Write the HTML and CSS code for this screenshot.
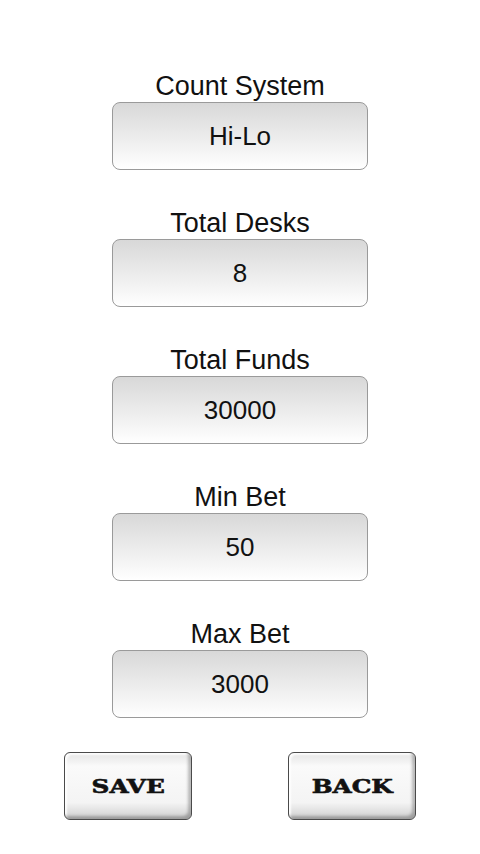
FILE: index.html
```html
<!DOCTYPE html>
<html lang="en">
<head>
  <meta charset="UTF-8">
  <title>Settings</title>
  <link rel="stylesheet" href="styles.css">
</head>
<body>

<div class="container">
  <div class="field">
    <div class="label">Count System</div>
    <div class="box">Hi-Lo</div>
  </div>
  <div class="field">
    <div class="label">Total Desks</div>
    <div class="box">8</div>
  </div>
  <div class="field">
    <div class="label">Total Funds</div>
    <div class="box">30000</div>
  </div>
  <div class="field">
    <div class="label">Min Bet</div>
    <div class="box">50</div>
  </div>
  <div class="field">
    <div class="label">Max Bet</div>
    <div class="box">3000</div>
  </div>

  <div class="buttons">
    <button class="btn"><span>SAVE</span></button>
    <button class="btn"><span>BACK</span></button>
  </div>
</div>

</body>
</html>
```

FILE: styles.css
```css
body {
  margin: 0;
  background: #fff;
  font-family: "Liberation Sans", Arial, sans-serif;
  color: #111;
}
.container {
  width: 480px;
  padding-top: 70px;
  display: flex;
  flex-direction: column;
  align-items: center;
}
.field {
  display: flex;
  flex-direction: column;
  align-items: center;
  margin-bottom: 37px;
}
.label {
  height: 32px;
  line-height: 32px;
  font-size: 27px;
}
.box {
  box-sizing: border-box;
  width: 256px;
  height: 68px;
  border: 1px solid #9a9a9a;
  border-radius: 8px;
  background: linear-gradient(#d8d8d8, #f3f3f3 70%, #fff);
  display: flex;
  align-items: center;
  justify-content: center;
  font-size: 26px;
}
.buttons {
  display: flex;
  gap: 96px;
  margin-top: -3px;
}
.btn {
  box-sizing: border-box;
  width: 128px;
  height: 68px;
  border: 1px solid #4a4a4a;
  border-radius: 6px;
  background: linear-gradient(#e4e4e4, #fafafa 20%, #f4f4f4 75%, #cfcfcf);
  box-shadow: inset -3px -3px 3px rgba(0,0,0,0.25), inset 2px 2px 2px rgba(255,255,255,0.9);
  padding: 0;
  display: flex;
  align-items: center;
  justify-content: center;
  font-family: "DejaVu Serif", serif;
  font-weight: bold;
  font-size: 19px;
  color: #111;
  -webkit-text-stroke: 0.6px #111;
}
.btn span {
  display: inline-block;
  transform: scaleX(1.3);
}
```
